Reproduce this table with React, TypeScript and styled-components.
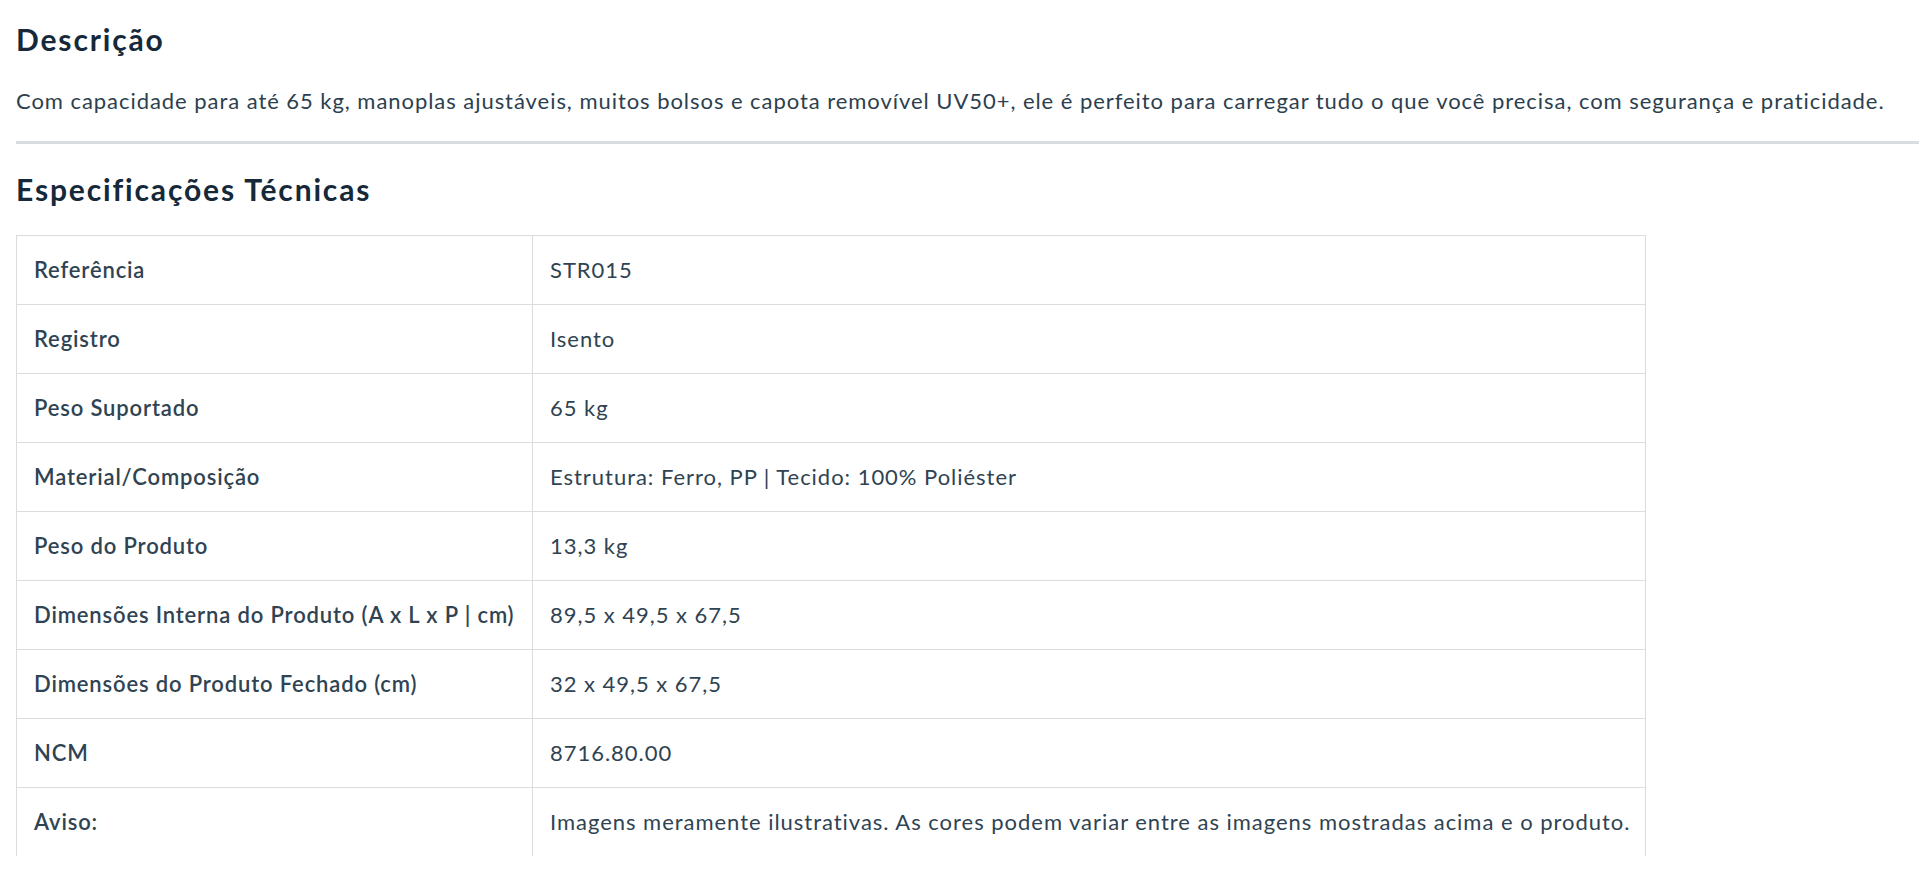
import React from "react";
import styled, { createGlobalStyle } from "styled-components";

const GlobalStyle = createGlobalStyle`
  html, body {
    margin: 0;
    padding: 0;
    background: #ffffff;
  }
  body {
    font-family: Lato, "Open Sans", "Liberation Sans", sans-serif;
    -webkit-font-smoothing: antialiased;
  }
`;

const Page = styled.main`
  padding: 22px 0 0 16px;
  color: #2c3f4e;
`;

const Title = styled.h2<{ $mt?: number }>`
  margin: ${(p) => p.$mt ?? 0}px 0 0 0;
  font-size: 30px;
  line-height: 34px;
  font-weight: 700;
  letter-spacing: 1.85px;
  color: #15293a;
`;

const Paragraph = styled.p`
  margin: 33px 0 0 0;
  font-size: 22px;
  line-height: 24px;
  letter-spacing: 0.95px;
  color: #2c3f4e;
  white-space: nowrap;
`;

const Divider = styled.hr`
  margin: 28px 0 0 0;
  border: none;
  height: 3px;
  background: #d9dde1;
`;

const SpecTable = styled.table`
  margin-top: 29px;
  width: 1630px;
  border-collapse: collapse;
  table-layout: fixed;
`;

const Row = styled.tr`
  &:last-child td {
    border-bottom: none;
  }
`;

const Cell = styled.td<{ $label?: boolean }>`
  border: 1px solid #dcdcdc;
  padding: 22px 17px 22px 17px;
  height: 24px;
  font-size: 22px;
  line-height: 24px;
  letter-spacing: ${(p) => (p.$label ? "0.85px" : "0.97px")};
  font-weight: ${(p) => (p.$label ? 600 : 400)};
  color: #2f4352;
  width: ${(p) => (p.$label ? "481px" : "auto")};
  white-space: nowrap;
`;

const specs: [string, string][] = [
  ["Referência", "STR015"],
  ["Registro", "Isento"],
  ["Peso Suportado", "65 kg"],
  ["Material/Composição", "Estrutura: Ferro, PP | Tecido: 100% Poliéster"],
  ["Peso do Produto", "13,3 kg"],
  ["Dimensões Interna do Produto (A x L x P | cm)", "89,5 x 49,5 x 67,5"],
  ["Dimensões do Produto Fechado (cm)", "32 x 49,5 x 67,5"],
  ["NCM", "8716.80.00"],
  [
    "Aviso:",
    "Imagens meramente ilustrativas. As cores podem variar entre as imagens mostradas acima e o produto.",
  ],
];

export default function App() {
  return (
    <>
      <GlobalStyle />
      <Page>
        <Title>Descrição</Title>
        <Paragraph>
          Com capacidade para até 65 kg, manoplas ajustáveis, muitos bolsos e
          capota removível UV50+, ele é perfeito para carregar tudo o que você
          precisa, com segurança e praticidade.
        </Paragraph>
        <Divider />
        <Title $mt={28}>Especificações Técnicas</Title>
        <SpecTable>
          <tbody>
            {specs.map(([label, value]) => (
              <Row key={label}>
                <Cell $label>{label}</Cell>
                <Cell>{value}</Cell>
              </Row>
            ))}
          </tbody>
        </SpecTable>
      </Page>
    </>
  );
}
